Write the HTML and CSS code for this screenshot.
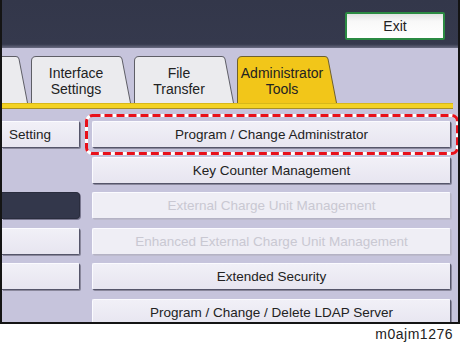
FILE: index.html
```html
<!DOCTYPE html>
<html lang="en">
<head>
  <meta charset="UTF-8">
  <meta name="viewport" content="width=device-width, initial-scale=1.0">
  <title>Administrator Tools</title>
  <link rel="stylesheet" href="styles.css">
</head>
<body>
  <div class="frame">
    <div class="topbar">
      <button class="exit">Exit</button>
    </div>

    <div class="tabs">
      <div class="tab">
        <svg class="tab-shape" viewBox="0 0 100 47" preserveAspectRatio="none"><path d="M0.5 47 V5 Q0.5 0.5 5 0.5 H88 Q90.5 0.5 91 3 L99.5 47"/></svg>
      </div>
      <div class="tab">
        <svg class="tab-shape" viewBox="0 0 100 47" preserveAspectRatio="none"><path d="M0.5 47 V5 Q0.5 0.5 5 0.5 H88 Q90.5 0.5 91 3 L99.5 47"/></svg>
        <span>Interface<br>Settings</span>
      </div>
      <div class="tab">
        <svg class="tab-shape" viewBox="0 0 100 47" preserveAspectRatio="none"><path d="M0.5 47 V5 Q0.5 0.5 5 0.5 H88 Q90.5 0.5 91 3 L99.5 47"/></svg>
        <span>File<br>Transfer</span>
      </div>
      <div class="tab active">
        <svg class="tab-shape" viewBox="0 0 100 47" preserveAspectRatio="none"><path d="M0.5 47 V5 Q0.5 0.5 5 0.5 H88 Q90.5 0.5 91 3 L99.5 47"/></svg>
        <span>Administrator<br>Tools</span>
      </div>
    </div>
    <div class="tab-rule"></div>

    <div class="panel">
      <div class="col-left">
        <div class="btn">Setting</div>
        <div class="slot"></div>
        <div class="btn dark"></div>
        <div class="btn"></div>
        <div class="btn"></div>
      </div>

      <div class="col-right">
        <div class="highlight">
          <div class="btn">Program / Change Administrator</div>
          <svg class="dash" viewBox="0 0 374 41">
            <rect class="dash-under" x="1.5" y="1.5" width="371" height="38" rx="6"/>
            <rect class="dash-over" x="1.5" y="1.5" width="371" height="38" rx="6"/>
          </svg>
        </div>
        <div class="btn">Key Counter Management</div>
        <div class="btn disabled">External Charge Unit Management</div>
        <div class="btn disabled">Enhanced External Charge Unit Management</div>
        <div class="btn">Extended Security</div>
        <div class="btn">Program / Change / Delete LDAP Server</div>
      </div>
    </div>
  </div>

  <p class="caption">m0ajm1276</p>
</body>
</html>
```

FILE: styles.css
```css
body {
  margin: 0;
  font-family: "Liberation Sans", Arial, sans-serif;
  background-color: #fff;
  color: #222;
}

.frame {
  box-sizing: border-box;
  width: 460px;
  height: 324px;
  border: 2px solid #141414;
  border-top: none;
  background-color: #c6c4dc;
  overflow: hidden;
}

.topbar {
  height: 48px;
  background: linear-gradient(#33374a 0%, #35394d 92%, #6a6c82 100%);
  display: flex;
  justify-content: flex-end;
  align-items: flex-start;
  padding-right: 13px;
  box-sizing: border-box;
}

.exit {
  margin-top: 12px;
  width: 100px;
  height: 28px;
  border: 2px solid #2b8a43;
  border-radius: 2px;
  background: linear-gradient(#e2e2e4 0%, #f8f8f8 30%, #ffffff 100%);
  font-family: inherit;
  font-size: 14px;
  color: #222;
  padding: 0;
}

.tabs {
  display: flex;
  gap: 3px;
  padding-top: 8px;
  height: 55px;
  box-sizing: border-box;
  overflow: hidden;
}

.tab {
  position: relative;
  flex: 0 0 100px;
  height: 47px;
  display: flex;
  align-items: center;
  justify-content: center;
  padding-right: 10px;
  box-sizing: border-box;
  text-align: center;
  font-size: 14px;
  line-height: 16px;
  color: #222;
}

.tab:first-child {
  margin-left: -74px;
}

.tab span {
  position: relative;
  padding-top: 3px;
}

.tab-shape {
  position: absolute;
  inset: 0;
  width: 100%;
  height: 100%;
}

.tab-shape path {
  fill: #ebebee;
  stroke: #5e5e66;
  stroke-width: 1;
}

.tab.active .tab-shape path {
  fill: #f2c619;
  stroke: #6e6030;
}

.tab-rule {
  height: 4px;
  margin-right: 5px;
  background-color: #f3d223;
  border-top: 1px solid #d8b818;
  border-bottom: 1px solid #a89024;
}

.panel {
  display: flex;
  gap: 12px;
  padding-top: 12px;
}

.col-left,
.col-right {
  display: flex;
  flex-direction: column;
  gap: 8.5px;
}

.col-left {
  width: 78px;
}

.col-right {
  width: 359px;
}

.btn {
  box-sizing: border-box;
  height: 27px;
  display: flex;
  align-items: center;
  justify-content: center;
  font-size: 13.5px;
  color: #222;
  white-space: nowrap;
  background: linear-gradient(#f1f0f7, #e7e5f0);
  border: 1px solid;
  border-color: #fbfbff #55556a #55556a #fbfbff;
  box-shadow: 1px 1px 0 #8a889c;
  border-radius: 2px;
}

.col-left .btn {
  justify-content: flex-end;
  padding-right: 28px;
  border-left: none;
  border-radius: 0 2px 2px 0;
}

.slot {
  height: 27px;
}

.btn.dark {
  background: #33374b;
  border-color: #2a2d3e;
  box-shadow: 1px 1px 0 #7a7890;
  border-radius: 0 4px 4px 0;
}

.btn.disabled {
  color: #c9c8d2;
  background: #efeef5;
  border-color: #fbfbff #b4b2c4 #b4b2c4 #fbfbff;
  box-shadow: 1px 1px 0 #bcbacc;
}

.highlight {
  position: relative;
}

.dash {
  position: absolute;
  left: -7px;
  top: -7px;
  width: 374px;
  height: 41px;
}

.dash rect {
  fill: none;
  stroke-width: 3;
}

.dash-under {
  stroke: #ffffff;
}

.dash-over {
  stroke: #e8101a;
  stroke-dasharray: 8 4;
}

.caption {
  margin: 2px 0 0;
  padding-right: 7px;
  text-align: right;
  font-size: 14px;
  letter-spacing: 0.5px;
  color: #222;
}
```
